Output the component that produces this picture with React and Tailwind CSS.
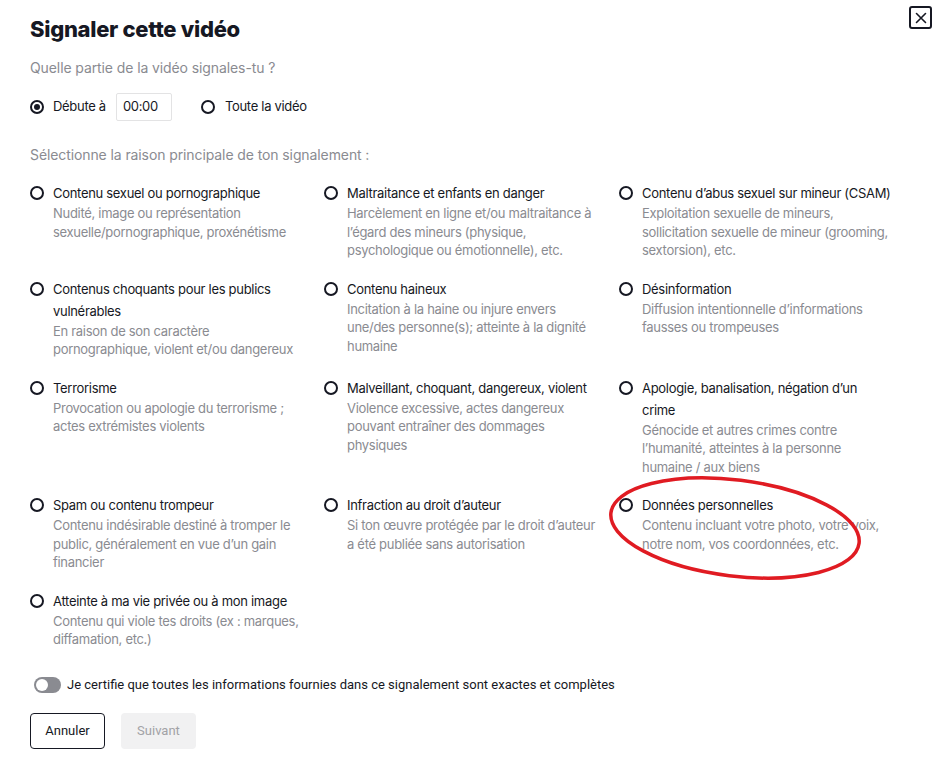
import React from 'react'

const reasons = [
  ['Contenu sexuel ou pornographique', 'Nudité, image ou représentation sexuelle/pornographique, proxénétisme'],
  ['Maltraitance et enfants en danger', 'Harcèlement en ligne et/ou maltraitance à l’égard des mineurs (physique, psychologique ou émotionnelle), etc.'],
  ['Contenu d’abus sexuel sur mineur (CSAM)', 'Exploitation sexuelle de mineurs, sollicitation sexuelle de mineur (grooming, sextorsion), etc.'],
  ['Contenus choquants pour les publics vulnérables', 'En raison de son caractère pornographique, violent et/ou dangereux'],
  ['Contenu haineux', 'Incitation à la haine ou injure envers une/des personne(s); atteinte à la dignité humaine'],
  ['Désinformation', 'Diffusion intentionnelle d’informations fausses ou trompeuses'],
  ['Terrorisme', 'Provocation ou apologie du terrorisme ; actes extrémistes violents'],
  ['Malveillant, choquant, dangereux, violent', 'Violence excessive, actes dangereux pouvant entraîner des dommages physiques'],
  ['Apologie, banalisation, négation d’un crime', 'Génocide et autres crimes contre l’humanité, atteintes à la personne humaine / aux biens'],
  ['Spam ou contenu trompeur', 'Contenu indésirable destiné à tromper le public, généralement en vue d’un gain financier'],
  ['Infraction au droit d’auteur', 'Si ton œuvre protégée par le droit d’auteur a été publiée sans autorisation'],
  ['Données personnelles', 'Contenu incluant votre photo, votre voix, notre nom, vos coordonnées, etc.'],
  ['Atteinte à ma vie privée ou à mon image', 'Contenu qui viole tes droits (ex : marques, diffamation, etc.)'],
]

function Radio({ checked }) {
  return (
    <span className="w-[14px] h-[14px] shrink-0 rounded-full border-2 border-[#161823] flex items-center justify-center">
      {checked && <span className="w-[6px] h-[6px] rounded-full bg-[#161823]" />}
    </span>
  )
}

export default function App() {
  return (
    <div className="relative w-[936px] h-[758px] bg-white text-[#161823] font-['Inter',sans-serif] pl-[30px] pt-[15px] overflow-hidden">
      {/* fermer */}
      <button className="absolute left-[909px] top-[6px] w-[23px] h-[23px] border-2 border-[#161823] rounded-[3px] flex items-center justify-center">
        <svg width="12" height="12" viewBox="0 0 12 12" stroke="#161823" strokeWidth="1.6" strokeLinecap="round">
          <path d="M1.5 1.5 L10.5 10.5 M10.5 1.5 L1.5 10.5" />
        </svg>
      </button>

      <h1 className="text-[22px] leading-[28px] font-extrabold tracking-[-0.3px]">Signaler cette vidéo</h1>

      <div className="mt-[15px] text-[14px] leading-[20px] text-[#8a8b91] tracking-[-0.1px]">Quelle partie de la vidéo signales-tu ?</div>

      <div className="mt-[15px] flex items-center h-[28px] text-[13px] tracking-[-0.3px]">
        <Radio checked />
        <span className="ml-[9px]">Débute à</span>
        <span className="ml-[10px] w-[56px] h-[28px] border border-[#e3e3e4] rounded-[2px] flex items-center pl-[6px]">00:00</span>
        <span className="ml-[29px]"><Radio /></span>
        <span className="ml-[10px]">Toute la vidéo</span>
      </div>

      <div className="mt-[24px] text-[14px] leading-[20px] text-[#8a8b91] tracking-[-0.1px]">Sélectionne la raison principale de ton signalement :</div>

      <div className="mt-[17px] grid grid-cols-[294px_295px_295px] gap-y-[18px]">
        {reasons.map(([title, desc]) => (
          <div key={title} className="flex items-start">
            <span className="mt-[4px]"><Radio /></span>
            <div className="ml-[9px] w-[249px] text-[13px] tracking-[-0.3px]">
              <div className="leading-[22px] text-[#161823]">{title}</div>
              <div className="leading-[18.5px] text-[#8a8b91]">{desc}</div>
            </div>
          </div>
        ))}
      </div>

      <div className="mt-[26px] flex items-center h-[20px] font-['Roboto',sans-serif] text-[13px]">
        <span className="ml-[4px] w-[27px] h-[16px] rounded-full bg-[#8a8b91] flex items-center pl-[2px]">
          <span className="w-[12px] h-[12px] rounded-full bg-white" />
        </span>
        <span className="ml-[6px]">Je certifie que toutes les informations fournies dans ce signalement sont exactes et complètes</span>
      </div>

      <div className="mt-[18px] flex gap-[16px] font-['Roboto',sans-serif] text-[13px]">
        <button className="w-[75px] h-[36px] border border-[#161823] rounded-[4px] bg-white">Annuler</button>
        <button className="w-[75px] h-[36px] rounded-[4px] bg-[#f1f1f2] text-[#a2a2a6]">Suivant</button>
      </div>

      {/* annotation */}
      <svg className="absolute left-0 top-0 pointer-events-none" width="936" height="758">
        <ellipse cx="735" cy="528" rx="125" ry="48" transform="rotate(7 735 528)" fill="none" stroke="#e01b22" strokeWidth="3.5" />
      </svg>
    </div>
  )
}
